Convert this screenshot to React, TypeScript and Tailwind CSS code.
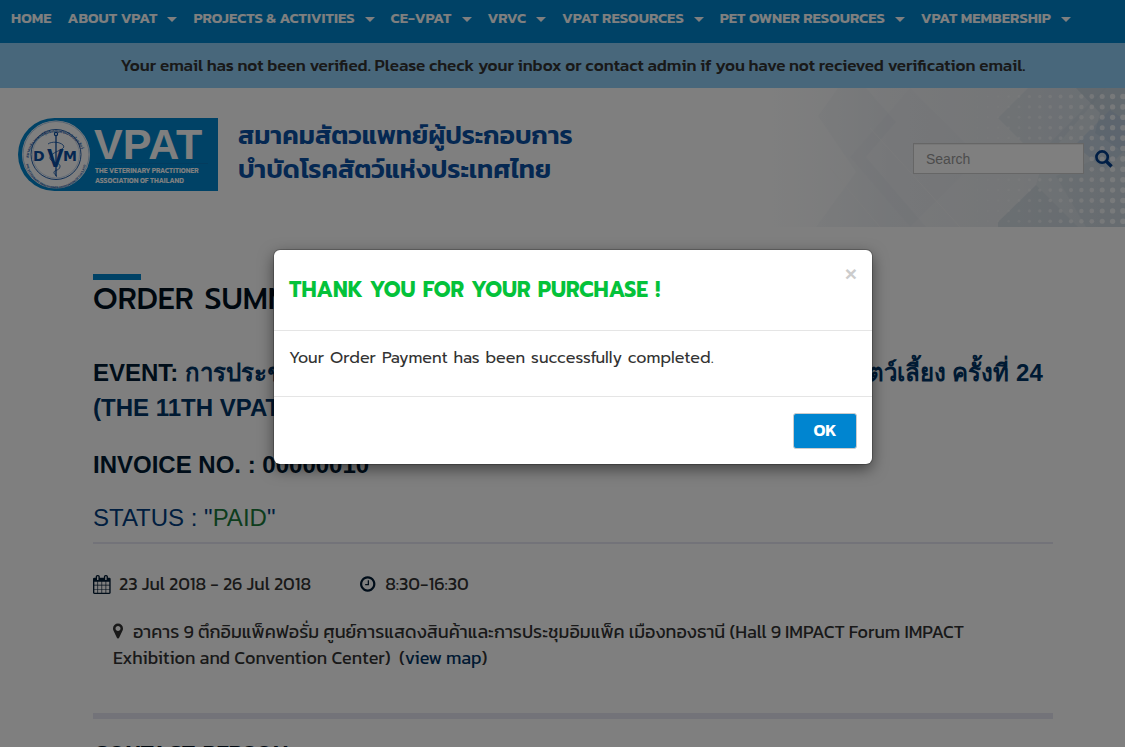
import React from "react";

type NavItem = { label: string; menu: boolean };

const navItems: NavItem[] = [
  { label: "HOME", menu: false },
  { label: "ABOUT VPAT", menu: true },
  { label: "PROJECTS & ACTIVITIES", menu: true },
  { label: "CE-VPAT", menu: true },
  { label: "VRVC", menu: true },
  { label: "VPAT RESOURCES", menu: true },
  { label: "PET OWNER RESOURCES", menu: true },
  { label: "VPAT MEMBERSHIP", menu: true },
];

function Navbar() {
  return (
    <nav className="h-[43px] bg-[#0085cc] pl-[11px] pr-[54px]">
      <ul className="flex justify-between">
        {navItems.map((item) => (
          <li key={item.label}>
            <a
              href="#"
              className="flex h-9 items-center gap-[10px] whitespace-nowrap text-[15px] font-semibold text-white"
            >
              {item.label}
              {item.menu && (
                <svg className="mt-[3px] h-[5px] w-[10px]" viewBox="0 0 10 5" fill="currentColor">
                  <path d="M0 0h10L5 5z" />
                </svg>
              )}
            </a>
          </li>
        ))}
      </ul>
    </nav>
  );
}

function Logo() {
  return (
    <svg className="h-[73px] w-[200px] shrink-0" viewBox="0 0 200 73" role="img" aria-label="VPAT">
      <defs>
        <path id="ring-top" d="M10.5 42a27.5 27.5 0 1 1 55 0" />
        <path id="ring-bottom" d="M7.5 40a30.5 30.5 0 0 0 61 0" />
      </defs>
      <path d="M36.5 0H200v73H36.5a36.5 36.5 0 0 1 0-73z" fill="#0085cc" />
      <circle cx="38" cy="36.5" r="34" fill="#fff" />
      <circle cx="38" cy="36.5" r="33" fill="none" stroke="#7fa8d4" strokeWidth="0.6" />
      <circle cx="38" cy="36.5" r="25" fill="none" stroke="#0b4ea2" strokeWidth="0.9" />
      <circle cx="38" cy="36.5" r="23.5" fill="none" stroke="#8fb0d8" strokeWidth="0.5" />
      <g className="font-['Kanit','Noto_Sans',sans-serif]" fill="#0b4ea2" fontWeight="500">
        <text fontSize="4">
          <textPath href="#ring-top" startOffset="2">
            สมาคมสัตวแพทย์ผู้ประกอบการบำบัดโรคสัตว์
          </textPath>
        </text>
        <text fontSize="3">
          <textPath href="#ring-bottom" startOffset="6">
            THE VETERINARY PRACTITIONER ASSOCIATION OF THAILAND
          </textPath>
        </text>
      </g>
      <g stroke="#0b4ea2" fill="none">
        <path d="M38 17v41" strokeWidth="1.3" />
        <circle cx="38" cy="16" r="1.6" strokeWidth="1.2" />
        <path
          d="M30 26c4-3 12-2 15 1s-3 5-7 7-8 5-5 8 10 3 9 7-7 3-6 6 4 2 2 4"
          strokeWidth="0.8"
        />
      </g>
      <text className="font-['DejaVu_Sans',sans-serif]" fill="#0b4ea2" fontWeight="700" fontSize="14">
        <tspan x="15" y="43">D</tspan>
        <tspan className="font-['Liberation_Sans',Arial,sans-serif]" x="29" y="49" fontSize="25">V</tspan>
        <tspan x="45" y="43">M</tspan>
      </text>
      <text
        className="font-['Liberation_Sans',Arial,sans-serif]"
        x="76"
        y="41"
        fontSize="43"
        fontWeight="700"
        fill="#fff"
      >
        VPAT
      </text>
      <path d="M78 45.500h112" stroke="#0a76b8" strokeWidth="0.8" />
      <g className="font-['Kanit','Noto_Sans',sans-serif]" fill="#fff" fontSize="7" fontWeight="600">
        <text x="77" y="55">THE VETERINARY PRACTITIONER</text>
        <text x="77" y="65">ASSOCIATION OF THAILAND</text>
      </g>
    </svg>
  );
}

const dotColumns = Array.from({ length: 20 }, (_, i) => i);
const dotRows = Array.from({ length: 13 }, (_, i) => i);

function HeaderPattern() {
  return (
    <svg className="absolute right-0 top-0 h-full w-[365px]" viewBox="0 0 365 139" aria-hidden="true">
      <defs>
        <linearGradient id="fade" x1="0" x2="1" y1="0" y2="0">
          <stop offset="0" stopColor="#f4f6f8" stopOpacity="0" />
          <stop offset="0.35" stopColor="#f0f2f5" />
          <stop offset="0.7" stopColor="#e9ecef" />
          <stop offset="1" stopColor="#dbe3ea" />
        </linearGradient>
      </defs>
      <path d="M0 0H365V139H0z" fill="url(#fade)" />
      <g fill="#a9bccb">
        <path d="M78 0L58 28l38 56-40 55h110l-60-70 30-35-30-34z" opacity="0.06" />
        <path d="M150 0l70 70-70 69-60-70z" opacity="0.04" />
        <path d="M238 30L268 0h78l-60 70h-8z" opacity="0.16" />
        <path d="M238 134l38-37 42 42h-80z" opacity="0.3" />
        <path d="M288 57l57-57h20v139h-47l-42-42z" opacity="0.14" />
        <path d="M316 0h49v65l-30-20 5-20z" opacity="0.35" />
        <path d="M296 88l70-30v81h-40z" opacity="0.15" />
      </g>
      <path d="M315 57l35-35 15 10v30l-20 20z" fill="#a5bfdb" opacity="0.35" />
      <path d="M110 40l90 99M70 80l50 59" stroke="#f7f7f7" strokeWidth="1" opacity="0.6" />
      <g fill="#fff">
        {dotColumns.map((c) =>
          dotRows.map((r) => (
            <circle
              key={`${c}-${r}`}
              cx={363 - c * 10.4}
              cy={8.5 + r * 10.4}
              r={Math.max(0.5, 2.8 - c * 0.14)}
              opacity={Math.max(0.1, 0.75 - c * 0.04)}
            />
          ))
        )}
      </g>
    </svg>
  );
}

function Header() {
  return (
    <header className="relative flex h-[139px] items-start justify-between pl-[18px] pr-3">
      <HeaderPattern />
      <div className="relative flex gap-5 pt-[30px]">
        <Logo />
        <p className="text-[26px] font-semibold leading-[34px] text-[#0a50a5]">
          สมาคมสัตวแพทย์ผู้ประกอบการ
          <br />
          บำบัดโรคสัตว์แห่งประเทศไทย
        </p>
      </div>
      <form className="relative flex items-center gap-[11px] pt-[55px]" onSubmit={(e) => e.preventDefault()}>
        <input
          type="text"
          aria-label="Search"
          placeholder="Search"
          className="h-[31px] w-[171px] border border-[#cccccc] bg-white px-3 font-['Liberation_Sans',Arial,sans-serif] text-sm shadow-[inset_0_1px_1px_rgba(0,0,0,0.075)] placeholder:text-[#999999]"
        />
        <button type="submit" aria-label="Submit search" className="text-[#003d8a]">
          <svg className="h-[18px] w-[18px]" viewBox="0 0 19 19" fill="none" stroke="currentColor">
            <circle cx="7.5" cy="7.5" r="6" strokeWidth="2.8" />
            <path d="M12 12l5.500 5.500" strokeWidth="3.6" />
          </svg>
        </button>
      </form>
    </header>
  );
}

function CalendarIcon() {
  return (
    <svg className="h-[19px] w-[19px]" viewBox="64 0 1792 1792" fill="#001a33">
      <path d="M192 1664h288v-288h-288v288zm352 0h320v-288h-320v288zm-352-352h288v-320h-288v320zm352 0h320v-320h-320v320zm-352-384h288v-288h-288v288zm736 736h320v-288h-320v288zm-384-736h320v-288h-320v288zm768 736h288v-288h-288v288zm-384-352h320v-320h-320v320zm-352-864v-288q0-13-9.500-22.500t-22.500-9.500h-64q-13 0-22.500 9.500t-9.500 22.500v288q0 13 9.500 22.500t22.500 9.500h64q13 0 22.500-9.500t9.500-22.500zm736 864h288v-320h-288v320zm-384-384h320v-288h-320v288zm384 0h288v-288h-288v288zm32-480v-288q0-13-9.500-22.500t-22.500-9.500h-64q-13 0-22.500 9.500t-9.500 22.500v288q0 13 9.500 22.500t22.500 9.500h64q13 0 22.500-9.500t9.500-22.500zm384-64v1280q0 52-38 90t-90 38h-1408q-52 0-90-38t-38-90v-1280q0-52 38-90t90-38h128v-96q0-66 47-113t113-47h64q66 0 113 47t47 113v96h384v-96q0-66 47-113t113-47h64q66 0 113 47t47 113v96h128q52 0 90 38t38 90z" />
    </svg>
  );
}

function ClockIcon() {
  return (
    <svg className="h-[18px] w-[18px]" viewBox="128 0 1792 1792" fill="#001a33">
      <path d="M1024 544v448q0 14-9 23t-23 9h-320q-14 0-23-9t-9-23v-64q0-14 9-23t23-9h224v-352q0-14 9-23t23-9h64q14 0 23 9t9 23zm416 352q0-148-73-273t-198-198-273-73-273 73-198 198-73 273 73 273 198 198 273 73 273-73 198-198 73-273zm224 0q0 209-103 385.500t-279.500 279.500-385.500 103-385.500-103-279.500-279.500-103-385.500 103-385.500 279.500-279.500 385.500-103 385.500 103 279.500 279.500 103 385.500z" />
    </svg>
  );
}

function MarkerIcon() {
  return (
    <svg className="mr-[10px] inline-block h-[18px] w-[10px] align-[-2px]" viewBox="384 0 1024 1792" fill="#333333">
      <path d="M1152 640q0-106-75-181t-181-75-181 75-75 181 75 181 181 75 181-75 75-181zm256 0q0 109-33 179l-364 774q-16 33-47.500 52t-67.500 19-67.500-19-46.500-52l-365-774q-33-70-33-179 0-212 150-362t362-150 362 150 150 362z" />
    </svg>
  );
}

function OrderSummary() {
  return (
    <main className="pl-[93px] pr-[72px] pt-[47px]">
      <div className="h-[6px] w-12 bg-[#0085cc]" />
      <h1 className="font-['Prompt','Kanit',sans-serif] text-[30px] font-medium leading-[38px] text-[#00101f]">
        ORDER SUMMARY
      </h1>
      <div className="font-['Liberation_Sans',Arial,sans-serif]">
        <h2 className="mt-[37px] whitespace-nowrap text-2xl font-bold leading-[35px] text-[#001a33]">
          EVENT:{" "}
          <a href="#" className="text-[#003466]">
            การประชุมวิชาการ ของสมาคมสัตวแพทย์ผู้ประกอบการบำบัดโรคสัตว์เลี้ยง ครั้งที่ 24
            <br />
            (THE 11TH VPAT REGIONAL VETERINARY CONGRESS - VRVC2018)
          </a>
        </h2>
        <h2 className="mt-[22px] text-2xl font-bold leading-[35px] text-[#001a33]">
          INVOICE NO. : 00000010
        </h2>
        <p className="mt-[18px] border-b-2 border-[#e6e6f2] pb-[7px] text-2xl leading-[35px] text-[#003d80]">
          STATUS : "<span className="text-[#1a7a3a]">PAID</span>"
        </p>
      </div>
      <div className="mt-[27px] flex gap-[49px] text-lg leading-[26px] text-[#333333]">
        <span className="flex items-center gap-[7px]">
          <CalendarIcon />
          23 Jul 2018 - 26 Jul 2018
        </span>
        <span className="flex items-center gap-[7px]">
          <ClockIcon />
          8:30-16:30
        </span>
      </div>
      <p className="mt-[22px] whitespace-nowrap px-5 text-lg leading-[26px] text-[#333333]">
        <MarkerIcon />
        อาคาร 9 ตึกอิมแพ็คฟอรั่ม ศูนย์การแสดงสินค้าและการประชุมอิมแพ็ค เมืองทองธานี (Hall 9 IMPACT Forum IMPACT
        <br />
        Exhibition and Convention Center)&nbsp; (
        <a href="#" className="text-[#003466]">
          view map
        </a>
        )
      </p>
      <hr className="mt-[42px] h-[6px] border-0 bg-[#e6e6f2]" />
      <h2 className="mt-[17px] font-['Prompt','Kanit',sans-serif] text-[22px] font-semibold leading-[38px] text-[#00101f]">
        CONTACT PERSON
      </h2>
    </main>
  );
}

function PurchaseModal() {
  return (
    <div className="absolute inset-0 flex items-start justify-center bg-black/50 pl-[21px] pt-[250px]">
      <div
        role="dialog"
        aria-modal="true"
        aria-labelledby="purchase-title"
        className="w-[598px] rounded-md bg-white font-['Prompt','Kanit','Noto_Sans',sans-serif] shadow-[0_5px_15px_rgba(0,0,0,0.5),0_0_0_1px_rgba(0,0,0,0.2)]"
      >
        <div className="flex h-[81px] items-start justify-between border-b border-[#e5e5e5] px-[15px] pt-[13px]">
          <h4 id="purchase-title" className="mt-[12px] text-[21px] font-bold leading-[30px] text-[#04c23a]">
            THANK YOU FOR YOUR PURCHASE !
          </h4>
          <button
            type="button"
            aria-label="Close"
            className="font-['Liberation_Sans',Arial,sans-serif] text-[21px] font-bold leading-[21px] text-[#cccccc]"
          >
            ×
          </button>
        </div>
        <div className="h-[66px] border-b border-[#e5e5e5] px-[15px] pt-[14px] text-base leading-[26px] text-[#333333]">
          Your Order Payment has been successfully completed.
        </div>
        <div className="flex h-[67px] items-center justify-end px-[15px]">
          <button
            type="button"
            className="h-9 w-16 rounded-[3px] border border-[#cccccc] bg-[#0085d0] font-['Kanit','Noto_Sans',sans-serif] text-[17px] font-semibold text-white"
          >
            OK
          </button>
        </div>
      </div>
    </div>
  );
}

export default function App() {
  return (
    <div className="relative h-screen overflow-hidden bg-white font-['Kanit','Noto_Sans',sans-serif]">
      <Navbar />
      <div className="flex h-[45px] items-center justify-center bg-[#90cef6] pl-[21px] text-[17px] font-medium text-[#333333]">
        Your email has not been verified. Please check your inbox or contact admin if you have not recieved verification email.
      </div>
      <Header />
      <OrderSummary />
      <PurchaseModal />
    </div>
  );
}
